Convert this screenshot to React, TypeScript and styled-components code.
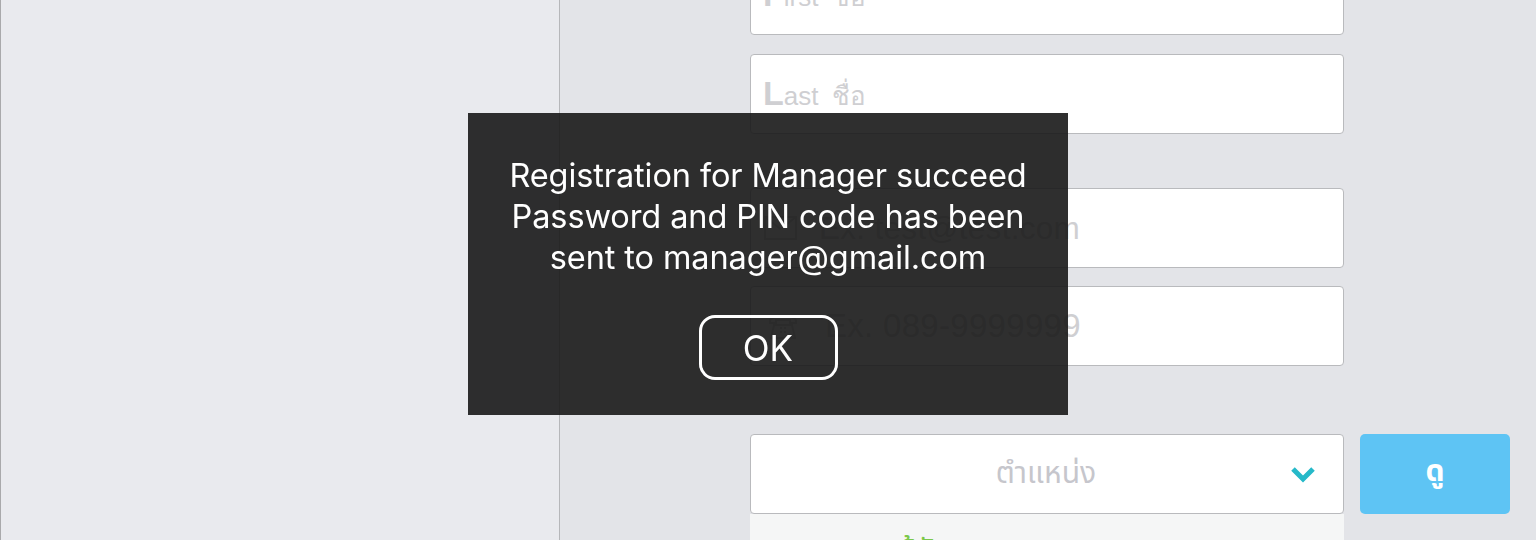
import React from 'react'
import styled, { createGlobalStyle } from 'styled-components'

const GlobalStyle = createGlobalStyle`
  html, body {
    margin: 0;
    padding: 0;
    height: 100%;
    overflow: hidden;
    background: #e3e4e8;
  }
  #root {
    height: 100%;
  }
`

const Page = styled.div`
  display: flex;
  height: 540px;
  overflow: hidden;
  font-family: 'Liberation Sans', 'Noto Sans Thai', 'Noto Sans', sans-serif;
`

const Sidebar = styled.aside`
  width: 558px;
  flex: none;
  background: #e9eaee;
  border-left: 1px solid #a9a9ab;
  border-right: 1px solid #b6b7ba;
`

const Main = styled.main`
  flex: 1;
  background: #e3e4e8;
  padding-left: 190px;
  padding-right: 26px;
`

const Form = styled.div`
  margin-top: -45px;
  display: flex;
  flex-direction: column;
`

const Field = styled.div<{ $gap?: number }>`
  width: 594px;
  height: 80px;
  box-sizing: border-box;
  margin-top: ${(p) => p.$gap ?? 0}px;
  background: #fff;
  border: 1px solid #b9babd;
  border-radius: 4px;
  display: flex;
  align-items: center;
  padding-left: 12px;
  gap: 22px;
`

const NameHint = styled.span`
  color: #cfcfd2;
  font-family: 'Liberation Sans Narrow', 'Liberation Sans', sans-serif;
  font-size: 26px;
  margin-top: 2px;
  display: flex;
  align-items: baseline;
  gap: 14px;
`

const BigLetter = styled.span`
  font-size: 34px;
  font-weight: bold;
`

const Hint = styled.span<{ $size?: number }>`
  color: #cfcfd2;
  font-family: 'Liberation Sans Narrow', 'Liberation Sans', sans-serif;
  font-size: ${(p) => p.$size ?? 33}px;
  letter-spacing: 0.3px;
`

const IconBox = styled.span<{ $w: number }>`
  width: ${(p) => p.$w}px;
  display: flex;
  justify-content: center;
  color: #d2d2d4;
`

const SelectRow = styled.div`
  margin-top: 68px;
  display: flex;
  gap: 16px;
`

const SelectCol = styled.div`
  display: flex;
  flex-direction: column;
`

const SelectBox = styled.div`
  width: 594px;
  height: 80px;
  box-sizing: border-box;
  background: #fff;
  border: 1px solid #b9babd;
  border-radius: 4px;
  position: relative;
  display: flex;
  align-items: center;
  justify-content: center;
`

const SelectText = styled.span`
  color: #c6c6cc;
  font-size: 30px;
  margin-right: 2px;
`

const Chevron = styled.svg`
  position: absolute;
  right: 27px;
  top: 31px;
`

const ViewButton = styled.button`
  width: 150px;
  height: 80px;
  border: none;
  border-radius: 5px;
  background: #5ec4f4;
  color: #fff;
  font-size: 30px;
  font-weight: bold;
  font-family: inherit;
  padding: 0 0 4px 0;
`

const ListPanel = styled.div`
  width: 594px;
  height: 60px;
  background: #f5f6f6;
  padding-left: 146px;
  box-sizing: border-box;
`

const ListText = styled.div`
  color: #7bc84a;
  font-size: 30px;
  padding-top: 14px;
`

const Overlay = styled.div`
  position: fixed;
  left: 468px;
  top: 113px;
  width: 600px;
  height: 302px;
  background: rgba(24, 24, 24, 0.9);
  display: flex;
  flex-direction: column;
  align-items: center;
  box-sizing: border-box;
  padding-top: 42px;
`

const Message = styled.p`
  margin: 0;
  color: #fff;
  font-family: Inter, 'Noto Sans', sans-serif;
  font-size: 32.5px;
  line-height: 41px;
  text-align: center;
  letter-spacing: -0.1px;
`

const OkButton = styled.button`
  margin-top: 37px;
  width: 139px;
  height: 65px;
  border: 3px solid #fff;
  border-radius: 16px;
  background: transparent;
  color: #fff;
  font-family: Inter, 'Noto Sans', sans-serif;
  font-size: 35px;
  padding: 0;
`

function MailIcon() {
  return (
    <svg width="33" height="24" viewBox="0 0 33 24" fill="none" stroke="currentColor" strokeWidth="2">
      <rect x="1" y="1" width="31" height="22" />
      <path d="M1 1 L16.5 13 L32 1" />
    </svg>
  )
}

function PhoneIcon() {
  return (
    <svg width="30" height="30" viewBox="0 0 30 30" fill="none" stroke="currentColor" strokeWidth="2">
      <path d="M2 10 C2 4 28 4 28 10 L28 12 L22 12 L22 9 L8 9 L8 12 L2 12 Z" />
      <path d="M6 14 L24 14 L27 27 L3 27 Z" />
      <path d="M12 17 h2 M16 17 h2 M12 21 h2 M16 21 h2" />
    </svg>
  )
}

function App() {
  return (
    <>
      <GlobalStyle />
      <Page>
        <Sidebar />
        <Main>
          <Form>
            <Field>
              <NameHint>
                <span>
                  <BigLetter>F</BigLetter>irst
                </span>
                <span>ชื่อ</span>
              </NameHint>
            </Field>
            <Field $gap={19}>
              <NameHint>
                <span>
                  <BigLetter>L</BigLetter>ast
                </span>
                <span>ชื่อ</span>
              </NameHint>
            </Field>
            <Field $gap={54}>
              <IconBox $w={34}>
                <MailIcon />
              </IconBox>
              <Hint $size={31.5}>Ex. test@test.com</Hint>
            </Field>
            <Field $gap={18}>
              <IconBox $w={40}>
                <PhoneIcon />
              </IconBox>
              <Hint>Ex. 089-9999999</Hint>
            </Field>
            <SelectRow>
              <SelectCol>
                <SelectBox>
                  <SelectText>ตำแหน่ง</SelectText>
                  <Chevron width="26" height="18" viewBox="0 0 26 18">
                    <path d="M3 3 L13 13 L23 3" fill="none" stroke="#26b9c9" strokeWidth="5" />
                  </Chevron>
                </SelectBox>
                <ListPanel>
                  <ListText>ผู้จัดการ</ListText>
                </ListPanel>
              </SelectCol>
              <ViewButton>ดู</ViewButton>
            </SelectRow>
          </Form>
        </Main>
      </Page>
      <Overlay>
        <Message>
          Registration for Manager succeed
          <br />
          Password and PIN code has been
          <br />
          sent to manager@gmail.com
        </Message>
        <OkButton>OK</OkButton>
      </Overlay>
    </>
  )
}

export default App
